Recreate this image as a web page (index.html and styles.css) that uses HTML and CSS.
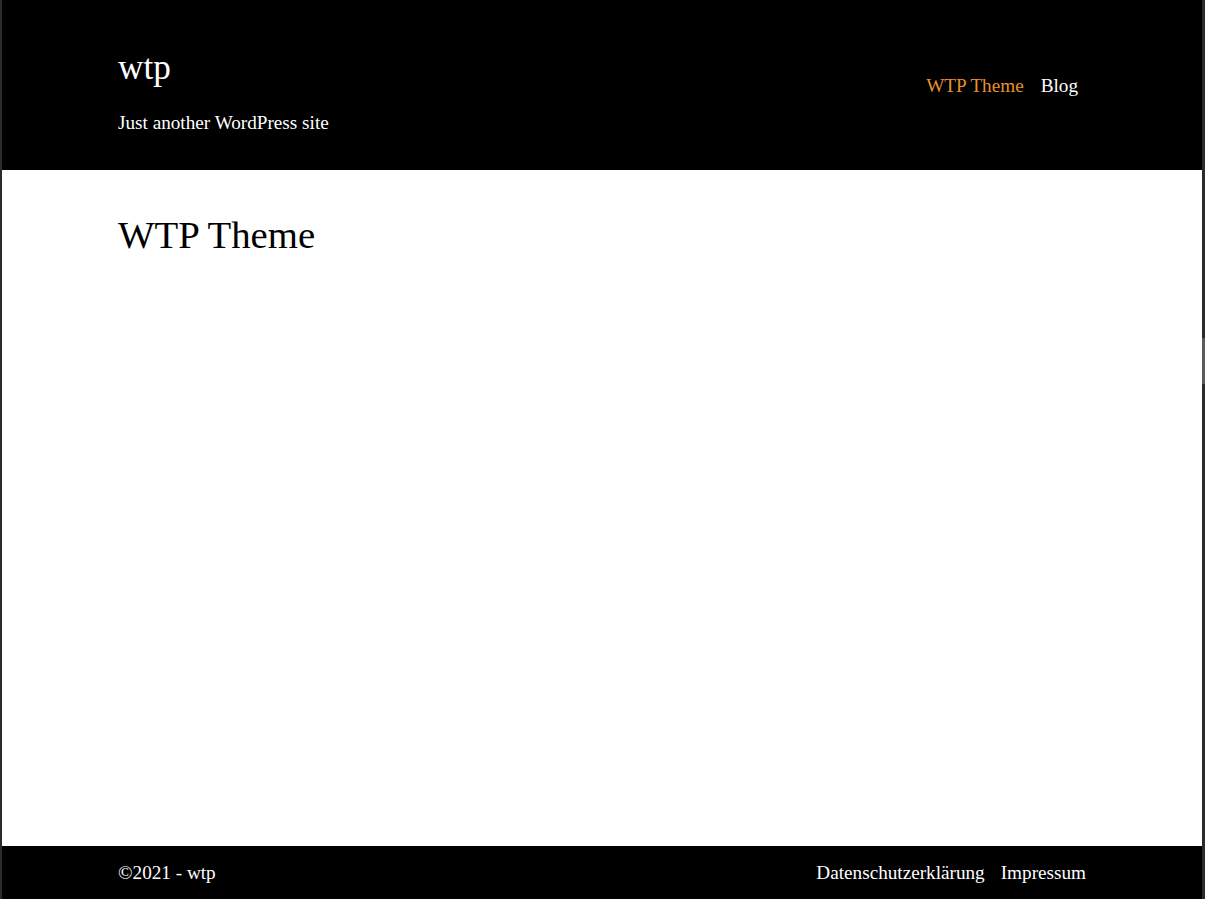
FILE: index.html
```html
<!DOCTYPE html>
<html lang="de">
<head>
<meta charset="utf-8">
<title>wtp</title>
<link rel="stylesheet" href="styles.css">
</head>
<body>
<div class="frame">
  <header class="site-header">
    <div class="container header-inner">
      <div class="branding">
        <div class="site-title">wtp</div>
        <p class="site-description">Just another WordPress site</p>
      </div>
      <nav class="main-nav">
        <a class="nav-link current" href="#">WTP Theme</a>
        <a class="nav-link" href="#">Blog</a>
      </nav>
    </div>
  </header>
  <main class="site-main">
    <div class="container">
      <h1 class="page-title">WTP Theme</h1>
    </div>
  </main>
  <footer class="site-footer">
    <div class="container footer-inner">
      <span class="copyright">©2021 - wtp</span>
      <nav class="footer-nav">
        <a class="footer-link" href="#">Datenschutzerklärung</a>
        <a class="footer-link" href="#">Impressum</a>
      </nav>
    </div>
  </footer>
  <div class="scroll-thumb"></div>
</div>
</body>
</html>
```
FILE: styles.css
```css
html, body {
  margin: 0;
  padding: 0;
  height: 100%;
}
body {
  font-family: "Liberation Serif", "Times New Roman", serif;
  font-size: 19.2px;
  background: #2b2b2b;
}
.frame {
  position: relative;
  box-sizing: border-box;
  height: 899px;
  margin-left: 2px;
  margin-right: 3px;
  background: #fff;
  display: flex;
  flex-direction: column;
}
.scroll-thumb {
  position: absolute;
  right: -3px;
  top: 338px;
  width: 3px;
  height: 46px;
  background: #5a5a5a;
}
.container {
  box-sizing: border-box;
  padding-left: 116px;
  padding-right: 116px;
}
.site-header {
  background: #000;
  color: #fff;
  height: 170px;
}
.header-inner {
  display: flex;
  justify-content: space-between;
  align-items: flex-start;
  padding-right: 124px;
}
.site-title {
  font-size: 35.2px;
  line-height: 1;
  margin-top: 50px;
}
.site-description {
  margin: 26px 0 0;
  line-height: 1.2;
}
.main-nav {
  display: flex;
  gap: 17px;
  margin-top: 74px;
  line-height: 1.2;
}
.nav-link {
  color: #fff;
  text-decoration: none;
}
.nav-link.current {
  color: #e8912a;
}
.site-main {
  flex: 1;
}
.page-title {
  font-size: 38.8px;
  font-weight: normal;
  line-height: 1.2;
  margin: 42px 0 0;
}
.site-footer {
  background: #000;
  color: #fff;
  height: 53px;
}
.footer-inner {
  display: flex;
  justify-content: space-between;
  align-items: center;
  height: 53px;
}
.footer-nav {
  display: flex;
  gap: 16px;
}
.footer-link {
  color: #fff;
  text-decoration: none;
}
```
